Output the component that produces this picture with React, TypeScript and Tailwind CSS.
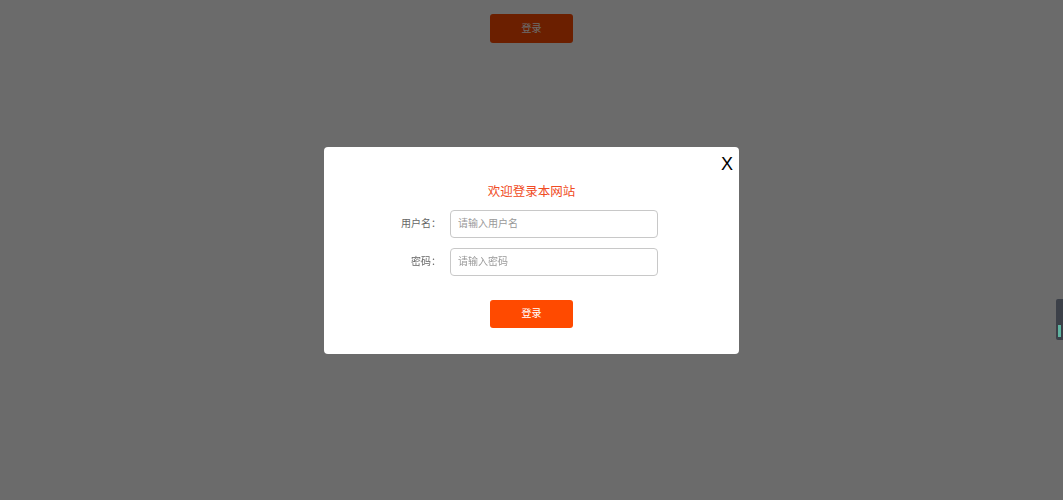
import { useState } from "react";

export default function App() {
  const [username, setUsername] = useState("");
  const [password, setPassword] = useState("");
  const [open, setOpen] = useState(true);

  return (
    <div
      className="relative min-h-screen w-full bg-white"
      style={{ fontFamily: '"Liberation Sans", "Noto Sans CJK SC", sans-serif' }}
    >
      {/* Page trigger button */}
      <div className="flex justify-center pt-[14px]">
        <button
          onClick={() => setOpen(true)}
          className="w-[83px] h-[29px] rounded-[3px] bg-[#ff4a00] text-white text-[10px]"
        >
          登录
        </button>
      </div>

      {open && (
        <div className="fixed inset-0 z-10 flex items-center justify-center bg-black/[0.58]">
          <div className="relative w-[415px] h-[207px] rounded-[4px] bg-white pt-[36px]">
            <button
              onClick={() => setOpen(false)}
              className="absolute top-[8px] right-[6px] text-[18px] leading-none text-black"
            >
              X
            </button>

            <h2 className="text-center text-[12.5px] leading-[18px] text-[#f04b23]">
              欢迎登录本网站
            </h2>

            <div className="mt-[9px] flex flex-col gap-[10px] pl-[52px]">
              <div className="flex items-center">
                <label className="w-[74px] pr-[9px] text-right text-[10px] text-[#666]">
                  用户名：
                </label>
                <input
                  value={username}
                  onChange={(e) => setUsername(e.target.value)}
                  placeholder="请输入用户名"
                  className="w-[208px] h-[28px] rounded-[4px] border border-[#c8c8c8] px-[7px] text-[10px] text-[#333] placeholder:text-[#999] outline-none"
                />
              </div>
              <div className="flex items-center">
                <label className="w-[74px] pr-[9px] text-right text-[10px] text-[#666]">
                  密码：
                </label>
                <input
                  type="password"
                  value={password}
                  onChange={(e) => setPassword(e.target.value)}
                  placeholder="请输入密码"
                  className="w-[208px] h-[28px] rounded-[4px] border border-[#c8c8c8] px-[7px] text-[10px] text-[#333] placeholder:text-[#999] outline-none"
                />
              </div>
            </div>

            <div className="mt-[24px] flex justify-center">
              <button className="w-[83px] h-[28px] rounded-[3px] bg-[#ff4a00] text-white text-[10px]">
                登录
              </button>
            </div>
          </div>
        </div>
      )}

      {/* Docked side widget */}
      <div className="fixed right-0 top-[299px] z-20 h-[41px] w-[7px] rounded-l-[2px] bg-[#3c4048] pl-[2px] pt-[26px]">
        <div className="h-[12px] w-[3px] bg-[#5fb3a0]" />
      </div>
    </div>
  );
}
